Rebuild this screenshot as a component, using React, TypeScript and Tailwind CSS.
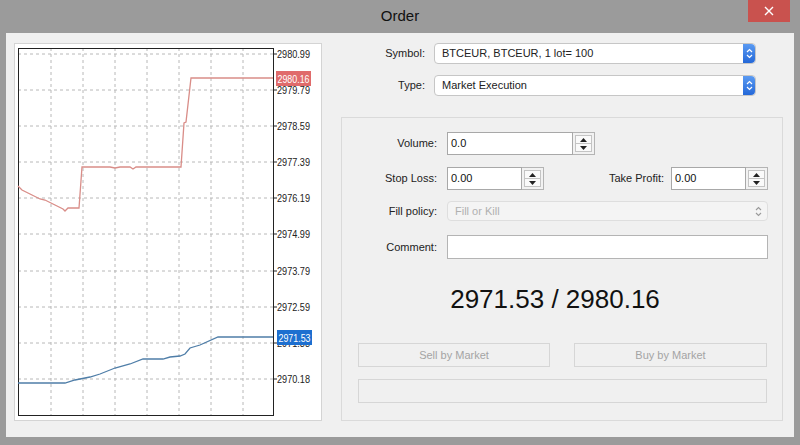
import React from 'react'

const font = { fontFamily: '"Liberation Sans", Arial, sans-serif' }

const gridY = [11, 47, 83, 119, 155, 191, 228, 264, 300, 336]
const gridX = [37, 69, 101, 133, 165, 197, 229]
const levels = ['2980.99', '2979.79', '2978.59', '2977.39', '2976.19', '2974.99', '2973.79', '2972.59', '2971.38', '2970.18']

const askLine =
  '4,143 8,147 16,151 26,156 31,157 41,162 49,166 51,168 54,165 65,165 68,124 96,124 101,125 106,124 116,124 119,126 122,124 167,124 170,80 172,79 177,35 259,35'
const bidLine =
  '4,340 51,340 61,337 76,334 86,331 101,325 116,321 129,316 149,316 156,314 166,313 171,311 176,305 186,302 204,294 259,294'

function PriceChart() {
  return (
    <div className="h-[378px] w-[308px] shrink-0 border border-[#d4d4d4] bg-white">
      <svg width="306" height="376" viewBox="1 1 306 376">
        {gridY.map((y) => (
          <line key={'h' + y} x1="4" x2="259" y1={y} y2={y} stroke="#b8b8b8" strokeDasharray="3 3" />
        ))}
        {gridX.map((x) => (
          <line key={'v' + x} x1={x} x2={x} y1="5" y2="373" stroke="#b8b8b8" strokeDasharray="3 3" />
        ))}
        <rect x="4.5" y="5.5" width="255" height="367" fill="none" stroke="#222" />
        {gridY.map((y, i) => (
          <g key={'t' + y}>
            <line x1="259" x2="263" y1={y} y2={y} stroke="#222" />
            <text
              x="263"
              y={y + 4}
              fontSize="11"
              fill="#222"
              textLength="33"
              lengthAdjust="spacingAndGlyphs"
              style={font}
            >
              {levels[i]}
            </text>
          </g>
        ))}
        <polyline points={askLine} fill="none" stroke="#d98d88" strokeWidth="1.3" />
        <polyline points={bidLine} fill="none" stroke="#4f7ea8" strokeWidth="1.3" />
        <rect x="262" y="28" width="35" height="15" fill="#e06b6b" />
        <text
          x="263.5"
          y="39.5"
          fontSize="11"
          fill="#fff"
          textLength="32"
          lengthAdjust="spacingAndGlyphs"
          style={font}
        >
          2980.16
        </text>
        <rect x="263" y="287" width="35" height="15" fill="#1d6fd0" />
        <text
          x="264.5"
          y="298.5"
          fontSize="11"
          fill="#fff"
          textLength="32"
          lengthAdjust="spacingAndGlyphs"
          style={font}
        >
          2971.53
        </text>
      </svg>
    </div>
  )
}

function BlueStepper() {
  return (
    <div className="flex h-[19px] w-[12px] items-center justify-center rounded-r-[4px] bg-gradient-to-b from-[#5a9af2] to-[#2468d8]">
      <svg width="7" height="11" viewBox="0 0 7 11">
        <path d="M1 4 L3.5 1.5 L6 4 M1 7 L3.5 9.5 L6 7" fill="none" stroke="#fff" strokeWidth="1.2" />
      </svg>
    </div>
  )
}

function SelectBox({ value }: { value: string }) {
  return (
    <div className="flex h-[21px] w-[322px] items-center rounded-[4px] border border-[#c6c6c6] bg-white pl-[7px]">
      <span className="flex-1 text-[11px] text-[#222]">{value}</span>
      <BlueStepper />
    </div>
  )
}

function Spinner() {
  return (
    <div className="flex h-[23px] w-[22px] shrink-0 flex-col border border-l-0 border-[#b4b4b4] bg-[#f2f2f2] p-[2px]">
      <div className="flex flex-1 items-center justify-center border border-[#c4c4c4] bg-[#fafafa]">
        <svg width="7" height="4" viewBox="0 0 7 4">
          <path d="M0 4 L3.5 0 L7 4 Z" fill="#222" />
        </svg>
      </div>
      <div className="flex flex-1 items-center justify-center border border-t-0 border-[#c4c4c4] bg-[#fafafa]">
        <svg width="7" height="4" viewBox="0 0 7 4">
          <path d="M0 0 L3.5 4 L7 0 Z" fill="#222" />
        </svg>
      </div>
    </div>
  )
}

function NumberField({ value, width }: { value: string; width: string }) {
  return (
    <div className="flex">
      <div className={`flex h-[23px] items-center border border-[#a8a8a8] bg-white pl-[3px] text-[11px] text-[#111] ${width}`}>
        {value}
      </div>
      <Spinner />
    </div>
  )
}

function Label({ children }: { children: React.ReactNode }) {
  return <span className="w-[96px] shrink-0 pr-[1px] text-right text-[11px] text-[#222]">{children}</span>
}

export default function App() {
  return (
    <div className="flex h-[445px] w-[800px] flex-col bg-[#9b9b9b]" style={font}>
      {/* Title bar */}
      <div className="relative flex h-[33px] items-center justify-center">
        <span className="text-[15px] text-[#111]">Order</span>
        <button
          type="button"
          className="absolute right-[10px] top-0 flex h-[22px] w-[42px] items-center justify-center bg-[#c9524e] text-white"
        >
          <svg width="10" height="10" viewBox="0 0 10 10">
            <path d="M1 1 L9 9 M9 1 L1 9" stroke="#fff" strokeWidth="1.4" />
          </svg>
        </button>
      </div>

      {/* Client area */}
      <div className="mx-[6px] mb-[8px] flex flex-1 bg-[#f0f0f0] pb-[16px] pl-[8px] pt-[10px]">
        <PriceChart />

        <div className="ml-[19px] flex w-[442px] flex-col">
          <div className="flex items-center gap-[9px]">
            <span className="w-[84px] text-right text-[11px] text-[#222]">Symbol:</span>
            <SelectBox value="BTCEUR, BTCEUR, 1 lot= 100" />
          </div>
          <div className="mt-[11px] flex items-center gap-[9px]">
            <span className="w-[84px] text-right text-[11px] text-[#222]">Type:</span>
            <SelectBox value="Market Execution" />
          </div>

          {/* Order group */}
          <div className="mt-[21px] flex flex-1 flex-col border border-[#dadada] pr-[14px] pt-[14px]">
            <div className="flex items-center gap-[9px]">
              <Label>Volume:</Label>
              <NumberField value="0.0" width="w-[126px]" />
            </div>

            <div className="mt-[12px] flex items-center gap-[9px]">
              <Label>Stop Loss:</Label>
              <NumberField value="0.00" width="w-[75px]" />
              <div className="ml-auto flex items-center gap-[7px]">
                <span className="text-[11px] text-[#222]">Take Profit:</span>
                <NumberField value="0.00" width="w-[75px]" />
              </div>
            </div>

            <div className="mt-[11px] flex items-center gap-[9px]">
              <Label>Fill policy:</Label>
              <div className="flex h-[20px] flex-1 items-center rounded-[4px] border border-[#dedede] bg-[#f4f4f4] pl-[7px] pr-[5px]">
                <span className="flex-1 text-[11px] text-[#b0b0b0]">Fill or Kill</span>
                <svg width="7" height="11" viewBox="0 0 7 11">
                  <path d="M1 4 L3.5 1.5 L6 4 M1 7 L3.5 9.5 L6 7" fill="none" stroke="#9a9a9a" strokeWidth="1.1" />
                </svg>
              </div>
            </div>

            <div className="mt-[14px] flex items-center gap-[9px]">
              <Label>Comment:</Label>
              <div className="h-[24px] flex-1 border border-[#b4b4b4] bg-white" />
            </div>

            <div className="mt-[25px] text-center text-[26px] leading-[30px] text-[#111]">
              2971.53 / 2980.16
            </div>

            <div className="ml-[16px] mt-[29px] flex gap-[24px]">
              <button
                type="button"
                className="h-[24px] w-[192px] border border-[#d6d6d6] bg-[#f0f0f0] text-[11px] text-[#a4a4a4]"
              >
                Sell by Market
              </button>
              <button
                type="button"
                className="h-[24px] w-[193px] border border-[#d6d6d6] bg-[#f0f0f0] text-[11px] text-[#a4a4a4]"
              >
                Buy by Market
              </button>
            </div>
            <div className="ml-[16px] mt-[12px] h-[24px] w-[409px] border border-[#d6d6d6] bg-[#f0f0f0]" />
          </div>
        </div>
      </div>
    </div>
  )
}
